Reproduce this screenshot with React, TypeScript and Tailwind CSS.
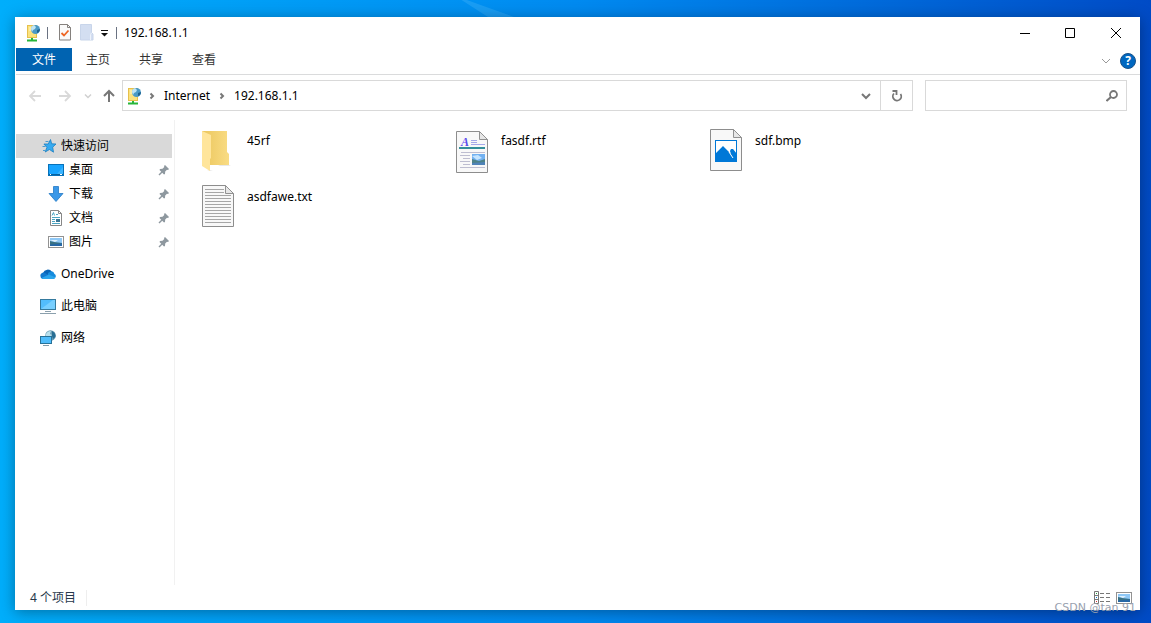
import type { ReactNode } from "react";

function ServerIcon() {
  return (
    <svg width="16" height="18" viewBox="0 0 16 18" aria-hidden="true">
      <rect x="1.5" y="1.5" width="9" height="12" fill="#fbe27d" stroke="#e6c04c" />
      <path d="M3 4h5M3 6h4" stroke="#fff6c8" />
      <path d="M6 14v2M1 16.500h10" stroke="#27b53a" strokeWidth="2" />
      <circle cx="9.500" cy="5.500" r="4.500" fill="#4a9ac6" />
      <path d="M5 5q0-3 3-4l2 2-1 2-2 1-1 2z" fill="#bfe4f4" />
      <path d="M11 6l3-1q0 3-3 4z" fill="#1d628f" />
    </svg>
  );
}

function PropertiesIcon() {
  return (
    <svg width="14" height="17" viewBox="0 0 14 17" aria-hidden="true">
      <path d="M1.500.5h8l3 3v12.500h-11z" fill="#fafafa" stroke="#85817e" />
      <path d="M9.500.5v3h3" fill="none" stroke="#85817e" />
      <path d="M3.500 9l2.500 2.500 4.500-5" fill="none" stroke="#ee6523" strokeWidth="1.800" />
    </svg>
  );
}

function NewFolderIcon() {
  return (
    <svg width="14" height="17" viewBox="0 0 14 17" aria-hidden="true">
      <path d="M.5.500h11v8l1.500 1.500v6h-12.500z" fill="#d3def1" stroke="#c8d5ea" />
      <path d="M10.500 16v-5.500l1-1.500" fill="none" stroke="#edf2fa" />
    </svg>
  );
}

function Arrow({ direction }: { direction: "left" | "right" | "up" }) {
  if (direction === "up") {
    return (
      <svg width="14" height="14" viewBox="0 0 14 14" fill="none" stroke="#777" strokeWidth="2" aria-hidden="true">
        <path d="M7 13V2M2 7l5-5 5 5" />
      </svg>
    );
  }
  return (
    <svg width="14" height="14" viewBox="0 0 14 14" fill="none" stroke="#d9d9d9" strokeWidth="1.800" aria-hidden="true">
      <path d={direction === "left" ? "M13 7H2M7 2L2 7l5 5" : "M1 7h11M7 2l5 5-5 5"} />
    </svg>
  );
}

function Chevron({ className, right, width = 2 }: { className: string; right?: boolean; width?: number }) {
  return (
    <svg width="10" height="8" viewBox="0 0 10 8" fill="none" stroke="currentColor" strokeWidth={width} className={className} aria-hidden="true">
      <path d={right ? "M3.500 1.500L6 4 3.500 6.500" : "M1 2l4 4 4-4"} />
    </svg>
  );
}

function StarIcon() {
  return (
    <svg width="16" height="16" viewBox="0 0 16 16" aria-hidden="true">
      <path d="M9.500 1.500l1.200 4.300 4.300.2-3.300 3.200.8 5-4-2.700-4.300 2.500 1.700-4.700-3-3.300h4.300z" fill="#35aaf0" stroke="#1c7fc0" strokeWidth=".8" />
      <path d="M4.500 3.500h3M1.500 8.500h3M2 12.500h2" stroke="#4a9bd0" />
    </svg>
  );
}

function DesktopIcon() {
  return (
    <svg width="16" height="16" viewBox="0 0 16 16" aria-hidden="true">
      <rect x=".5" y="2.500" width="15" height="11" fill="#19a5ff" stroke="#0872b9" />
      <path d="M9 12L15 5v7z" fill="#3bb5ff" />
      <path d="M1 12.500h14" stroke="#08629f" />
      <path d="M2 12.500h1M12 12.500h2" stroke="#fff" />
    </svg>
  );
}

function DownloadIcon() {
  return (
    <svg width="16" height="16" viewBox="0 0 16 16" aria-hidden="true">
      <path d="M5.500.500h5v7h4.500L8 15.500 1 7.500h4.500z" fill="#3b98e8" stroke="#2379c5" strokeWidth=".8" />
    </svg>
  );
}

function DocumentIcon() {
  return (
    <svg width="16" height="16" viewBox="0 0 16 16" aria-hidden="true">
      <path d="M2.500.500h8l3 3v12h-11z" fill="#fff" stroke="#878787" />
      <path d="M10.500.500v3h3" fill="none" stroke="#878787" />
      <path d="M4 5.500l1.500-3 1 3M8 4.500h2M4 7.500h8M4 9.500h3M4 11.500h3M4 13.500h8" fill="none" stroke="#4ba5c4" />
      <path d="M8 9h4v3H8z" fill="#3b7796" />
    </svg>
  );
}

function PictureIcon() {
  return (
    <svg width="16" height="16" viewBox="0 0 16 16" aria-hidden="true">
      <rect x=".5" y="2.500" width="15" height="11" fill="#fff" stroke="#929292" />
      <path d="M2 4h12v8H2z" fill="#8fc8f6" />
      <path d="M2 6h8l-3 2z" fill="#e0f1fc" />
      <path d="M2 7l4 1 8 1v3H2z" fill="#397184" />
      <path d="M2 10.500l12-1v2.500H2z" fill="#2667a6" />
    </svg>
  );
}

function PinIcon() {
  return (
    <svg width="12" height="12" viewBox="0 0 12 12" aria-hidden="true">
      <path d="M7 1l4 4-1 1-1-.3L7.200 7.500 7 10 6 10.500 1.500 6l.5-1 2.500-.2L6.300 3 6 2z" fill="#8e989f" />
      <path d="M4.500 7.500L1 11" stroke="#8e989f" strokeWidth="1.500" />
    </svg>
  );
}

function OneDriveIcon() {
  return (
    <svg width="16" height="16" viewBox="0 0 16 16" aria-hidden="true">
      <path d="M3 7a5 5 0 0 1 9-1l-4 4z" fill="#0864b7" />
      <path d="M8 7q5-4 6.500 1 2 1 1 3.500L8 10z" fill="#168bdd" />
      <path d="M1 12Q-1 7 4 6.500L14.500 12l-1.500 1H3z" fill="#1279cf" />
      <path d="M1.500 12L9 8.500l6.500 3Q15 13 13 13H3q-1 0-1.500-1z" fill="#2ba5ec" />
    </svg>
  );
}

function ComputerIcon() {
  return (
    <svg width="16" height="16" viewBox="0 0 16 16" aria-hidden="true">
      <rect x=".5" y="1.500" width="15" height="10" fill="#53bdfc" stroke="#357a9e" />
      <path d="M1 11L13 2h2v9z" fill="#78cfff" />
      <path d="M5 13.500h6M0 15.500h16" stroke="#8ba0ad" />
    </svg>
  );
}

function NetworkIcon() {
  return (
    <svg width="16" height="16" viewBox="0 0 16 16" aria-hidden="true">
      <circle cx="10.500" cy="5.500" r="5.300" fill="#6b9db5" />
      <path d="M5.500 5Q7 1 11 1l-1 3 2 1-2 2H6z" fill="#b9e0ec" />
      <path d="M12 1q4 2 3.500 6L13 9l-1-3z" fill="#286d93" />
      <rect x=".5" y="6.500" width="11" height="7" fill="#50bdfb" stroke="#287298" />
      <path d="M3 15.500h6" stroke="#829ba9" />
    </svg>
  );
}

function FolderFileIcon() {
  return (
    <svg width="48" height="48" viewBox="0 0 48 48" aria-hidden="true">
      <defs>
        <linearGradient id="folder-back" x1="0" x2="1">
          <stop stopColor="#ebc65d" />
          <stop offset="1" stopColor="#f9dc84" />
        </linearGradient>
      </defs>
      <path d="M26 38h11l-2 1H24zM13 43h6l-3 1z" fill="#e9e9e9" />
      <path d="M8 4h25v21l2 2v11H9z" fill="url(#folder-back)" />
      <path d="M8 4l9 4v23l-1 1v12L8 39z" fill="#ffe59b" />
    </svg>
  );
}

function Paper({ children, top = 0 }: { children: ReactNode; top?: number }) {
  return (
    <svg width="48" height="48" viewBox="0 0 48 48" aria-hidden="true">
      <g transform={`translate(0 ${top})`}>
        <path d="M8.500 2.500h23l8 8v33h-31z" fill="#f8f8f8" stroke="#8d8d8d" />
        {children}
        <path d="M31.500 2.500v8h8z" fill="#e7e7e7" stroke="#919191" />
      </g>
    </svg>
  );
}

function TextFileIcon() {
  return (
    <Paper>
      <path d="M11 6.500h19M11 9.500h19M11 12.500h26M11 15.500h26M11 18.500h26M11 21.500h26M11 24.500h26M11 27.500h26M11 30.500h26M11 33.500h26M11 36.500h26M11 39.500h26" stroke="#a6a6a6" />
    </Paper>
  );
}

function RichTextFileIcon() {
  return (
    <Paper top={2}>
      <text x="13" y="17" fill="#5a4cec" fontFamily="Liberation Serif, serif" fontSize="12" fontStyle="italic" fontWeight="bold">A</text>
      <path d="M23 11.500h6M23 13.500h6M23 15.500h14" stroke="#a6a8ea" />
      <path d="M11 19h26" stroke="#348e9a" strokeWidth="2" />
      <path d="M13 23.500h24M12 26.500h10M15 29.500h7M12 32.500h10M15 35.500h7M12 38.500h25" stroke="#bdbdd0" />
      <path d="M24 25h13v11H24z" fill="#72b1f1" />
      <path d="M24 27l6-1 4 3-5 2z" fill="#c5e5ff" />
      <path d="M24 30l7 2 6-2v6H24z" fill="#4e8388" />
      <path d="M24 34l13-1v3H24z" fill="#4f83b8" />
    </Paper>
  );
}

function BitmapFileIcon() {
  return (
    <Paper>
      <rect x="13.500" y="13.500" width="21" height="21" fill="#fff" stroke="#0078d7" />
      <path d="M14 26l7-7 5 5 3 3-1-3 1-2h2l4 5v8H14z" fill="#0078d7" />
      <path d="M27 25l4 6" stroke="#fff" />
    </Paper>
  );
}

const quickLinks = [
  { name: "桌面", icon: <DesktopIcon /> },
  { name: "下载", icon: <DownloadIcon /> },
  { name: "文档", icon: <DocumentIcon /> },
  { name: "图片", icon: <PictureIcon /> },
];

const places = [
  { name: "OneDrive", icon: <OneDriveIcon /> },
  { name: "此电脑", icon: <ComputerIcon /> },
  { name: "网络", icon: <NetworkIcon /> },
];

const files = [
  { name: "45rf", icon: <FolderFileIcon /> },
  { name: "fasdf.rtf", icon: <RichTextFileIcon /> },
  { name: "sdf.bmp", icon: <BitmapFileIcon /> },
  { name: "asdfawe.txt", icon: <TextFileIcon /> },
];

function TitleBar() {
  return (
    <header className="flex h-[31px] items-center pl-2.5">
      <ServerIcon />
      <span className="ml-[5px] h-3 w-px bg-gray-500" />
      <button aria-label="属性" className="ml-2.5"><PropertiesIcon /></button>
      <button aria-label="新建文件夹" className="ml-2"><NewFolderIcon /></button>
      <button aria-label="自定义快速访问工具栏" className="ml-[7px]">
        <svg width="8" height="8" viewBox="0 0 8 8" aria-hidden="true">
          <path d="M0 1.500h7" stroke="#111" />
          <path d="M0 4h7L3.500 7.500z" fill="#111" />
        </svg>
      </button>
      <span className="ml-[7px] h-3 w-px bg-gray-500" />
      <h1 className="ml-[7px] text-xs">192.168.1.1</h1>
      <div className="ml-auto flex h-full">
        <button aria-label="最小化" className="flex w-[46px] items-center justify-center">
          <svg width="10" height="10" viewBox="0 0 10 10" stroke="#000" aria-hidden="true"><path d="M0 5.500h10" /></svg>
        </button>
        <button aria-label="最大化" className="flex w-11 items-center justify-center">
          <svg width="10" height="10" viewBox="0 0 10 10" fill="none" stroke="#000" aria-hidden="true"><path d="M.5.500h9v9h-9z" /></svg>
        </button>
        <button aria-label="关闭" className="flex w-12 items-center justify-center">
          <svg width="10" height="10" viewBox="0 0 10 10" stroke="#000" aria-hidden="true"><path d="M0 0l10 10M10 0L0 10" /></svg>
        </button>
      </div>
    </header>
  );
}

function RibbonTabs() {
  return (
    <nav className="flex h-[27px] items-start border-b border-[#dadbdc] text-xs text-[#333]">
      <button className="h-[23px] w-14 bg-[#0063b1] text-white">文件</button>
      <button className="h-[23px] w-[53px] pr-px">主页</button>
      <button className="h-[23px] w-[53px] pr-px">共享</button>
      <button className="h-[23px] w-[53px] pr-px">查看</button>
      <div className="ml-auto flex h-[26px] items-center gap-[9px] pr-1">
        <button aria-label="展开功能区"><Chevron className="text-[#999]" width={1} /></button>
        <button aria-label="帮助" className="flex size-4 items-center justify-center rounded-full border border-[#17518a] bg-[#0067c0] text-xs font-bold text-white">?</button>
      </div>
    </nav>
  );
}

function AddressBar() {
  return (
    <div className="flex h-[41px] items-center pr-[13px] pl-3">
      <button aria-label="后退"><Arrow direction="left" /></button>
      <button aria-label="前进" className="ml-4"><Arrow direction="right" /></button>
      <button aria-label="最近浏览的位置" className="ml-3">
        <svg width="8" height="6" viewBox="0 0 8 6" fill="none" stroke="#d0d0d0" strokeWidth="1.500" aria-hidden="true">
          <path d="M1 1.500l3 3 3-3" />
        </svg>
      </button>
      <button aria-label="向上" className="ml-2.5"><Arrow direction="up" /></button>
      <div className="ml-1.5 flex h-[31px] flex-1 items-center border border-[#d9d9d9] pl-1">
        <ServerIcon />
        <Chevron className="ml-1 text-[#777]" right />
        <a href="#internet" className="ml-[7px] text-xs">Internet</a>
        <Chevron className="ml-[7px] text-[#777]" right />
        <a href="#host" className="ml-[7px] text-xs">192.168.1.1</a>
        <button aria-label="以前的位置" className="ml-auto px-[9px]"><Chevron className="text-[#777]" /></button>
        <button aria-label="刷新" className="flex h-full w-8 items-center justify-center border-l border-[#d9d9d9]">
          <svg width="12" height="13" viewBox="0 0 12 13" fill="none" stroke="#777" strokeWidth="1.800" aria-hidden="true">
            <path d="M3 4.500a4.200 4.200 0 1 0 6.500.5M1.500 2h4v4" />
          </svg>
        </button>
      </div>
      <label className="ml-3 flex h-[31px] w-[202px] items-center border border-[#d9d9d9] pr-2">
        <input aria-label="搜索" className="min-w-0 flex-1 px-2 text-xs outline-none" />
        <svg width="12" height="12" viewBox="0 0 12 12" fill="none" stroke="#777" strokeWidth="1.800" aria-hidden="true">
          <circle cx="7.500" cy="4.500" r="3.500" /><path d="M5 7l-4.500 4" strokeWidth="2" />
        </svg>
      </label>
    </div>
  );
}

function Sidebar() {
  return (
    <aside className="mt-1 w-[159px] shrink-0 border-r border-[#f1f1f1] pt-3.5 text-xs">
      <a href="#quick" className="mr-0.5 flex h-6 items-center gap-1 bg-[#d9d9d9] pl-[25px]"><StarIcon />快速访问</a>
      {quickLinks.map((link) => (
        <a href={`#${link.name}`} key={link.name} className="flex h-6 items-center gap-[5px] pr-1 pl-8">
          {link.icon}
          <span className="flex-1">{link.name}</span>
          <PinIcon />
        </a>
      ))}
      <div className="mt-2 flex flex-col gap-2">
        {places.map((place) => (
          <a href={`#${place.name}`} key={place.name} className="flex h-6 items-center gap-[5px] pl-6">
            {place.icon}
            {place.name}
          </a>
        ))}
      </div>
    </aside>
  );
}

export default function App() {
  return (
    <div className="relative flex min-h-screen bg-linear-to-r from-[#00aefb] via-[#008af0] to-[#004bc6] px-[11px] pt-[17px] pb-[13px] pl-[15px] font-['Noto_Sans','Noto_Sans_CJK_SC',sans-serif] text-black">
      <svg width="70" height="17" viewBox="0 0 70 17" className="absolute top-0 left-[40%] opacity-20" aria-hidden="true">
        <path d="M0-1l28 18h26L4-1z" fill="#7fd0ff" />
      </svg>
      <div className="relative flex min-w-0 flex-1 flex-col bg-white pl-px shadow-[0_2px_14px_rgba(0,0,0,0.35)]">
        <TitleBar />
        <RibbonTabs />
        <AddressBar />
        <div className="flex flex-1">
          <Sidebar />
          <main className="flex-1 pt-[11px] pl-[19px]">
            <ul className="grid grid-cols-[repeat(auto-fill,254px)] gap-y-2">
              {files.map((file) => (
                <li key={file.name} className="flex h-12 text-xs">
                  {file.icon}
                  <a href={`#${file.name}`} className="pt-1.5 pl-[5px]">{file.name}</a>
                </li>
              ))}
            </ul>
          </main>
        </div>
        <footer className="flex h-[25px] items-center pr-2 pl-3.5 text-xs text-[#26374a]">
          <span className="border-r border-[#eee] pr-2.5">4 个项目</span>
          <div className="relative ml-auto flex items-center gap-1.5">
            <button aria-label="详细信息">
              <svg width="16" height="14" viewBox="0 0 16 14" fill="none" stroke="#777" aria-hidden="true">
                <path d="M.5.500h4v12h-4zM.5 4.500h4M.5 8.500h4M6 2.500h4M12 2.500h4M6 6.500h4M12 6.500h4M6 10.500h4M12 10.500h4" />
                <path d="M2 2.500h1" stroke="#27a243" /><path d="M2 6.500h1" stroke="#087bdd" /><path d="M2 10.500h1" stroke="#d33" />
              </svg>
            </button>
            <button aria-label="大图标"><PictureIcon /></button>
            <span className="absolute top-3 -right-1 font-['DejaVu_Sans',sans-serif] text-[11px] leading-3 whitespace-nowrap text-gray-400">CSDN @tan 91</span>
          </div>
        </footer>
      </div>
    </div>
  );
}
